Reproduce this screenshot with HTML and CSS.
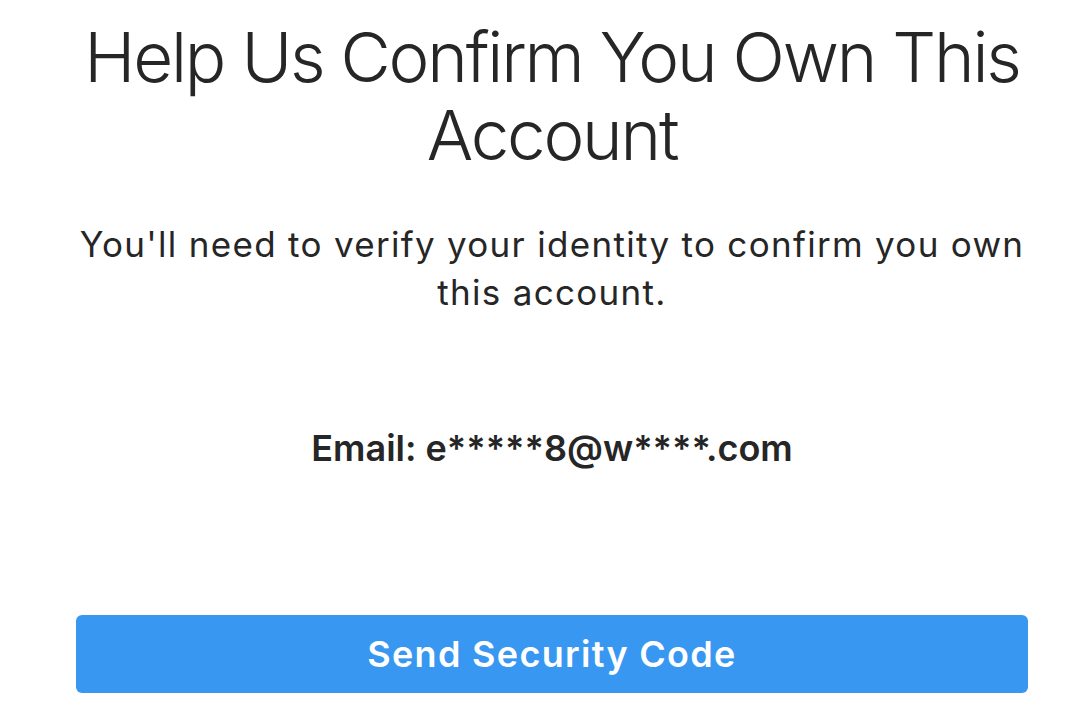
FILE: index.html
```html
<!DOCTYPE html>
<html>
<head>
<meta charset="utf-8">
<link rel="stylesheet" href="styles.css">
</head>
<body>
<main class="page">
  <h1 class="title">Help Us Confirm You Own This Account</h1>
  <p class="lead">You'll need to verify your identity to confirm you own this account.</p>
  <p class="email">Email: e*****8@w****.com</p>
  <button class="send">Send Security Code</button>
</main>
</body>
</html>
```

FILE: styles.css
```css
html, body {
  margin: 0;
  padding: 0;
  background: #ffffff;
}
.page {
  width: 952px;
  margin-left: 76px;
  display: flex;
  flex-direction: column;
  align-items: center;
  font-family: Inter, "Liberation Sans", sans-serif;
  color: #262626;
  text-align: center;
}
.title {
  margin: 18px 0 0 0;
  font-size: 69px;
  font-weight: 300;
  line-height: 78px;
  letter-spacing: -2.2px;
  width: 952px;
}
.lead {
  margin: 46px 0 0 0;
  font-size: 35px;
  font-weight: 400;
  line-height: 48px;
  letter-spacing: 1.3px;
  width: 952px;
}
.email {
  margin: 108px 0 0 0;
  font-size: 36px;
  font-weight: 600;
  line-height: 48px;
}
.send {
  margin-top: 143px;
  width: 952px;
  height: 78px;
  border: none;
  border-radius: 6px;
  background: #3897f0;
  color: #ffffff;
  font-family: Inter, "Liberation Sans", sans-serif;
  font-size: 36px;
  font-weight: 600;
  letter-spacing: 1.3px;
  padding: 0;
}
```
